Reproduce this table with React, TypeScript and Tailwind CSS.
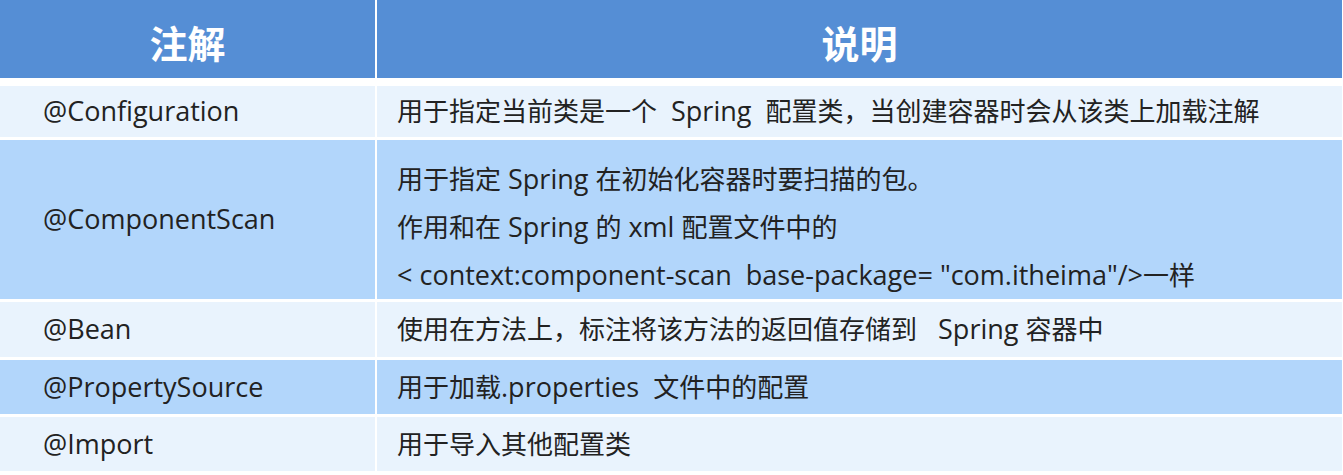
import React from "react";

const font = { fontFamily: '"Open Sans", "Noto Sans CJK SC", sans-serif' };

function Mixed({ text }: { text: string }) {
  const parts = text.split(/([\u3000-\u9fff\uff00-\uffef]+)/).filter((p) => p.length > 0);
  return (
    <>
      {parts.map((p, i) =>
        /[\u3000-\u9fff\uff00-\uffef]/.test(p) ? (
          <span key={i}>{p}</span>
        ) : (
          <span key={i} className="text-[27px]">
            {p}
          </span>
        )
      )}
    </>
  );
}

const rows: { name: string; desc: string[]; dark: boolean; h: string }[] = [
  { name: "@Configuration", desc: ["用于指定当前类是一个  Spring  配置类，当创建容器时会从该类上加载注解"], dark: false, h: "h-[51px]" },
  {
    name: "@ComponentScan",
    desc: [
      "用于指定 Spring 在初始化容器时要扫描的包。",
      "作用和在 Spring 的 xml 配置文件中的",
      "< context:component-scan  base-package= \"com.itheima\"/>一样",
    ],
    dark: true,
    h: "h-[159px]",
  },
  { name: "@Bean", desc: ["使用在方法上，标注将该方法的返回值存储到   Spring 容器中"], dark: false, h: "h-[55px]" },
  { name: "@PropertySource", desc: ["用于加载.properties  文件中的配置"], dark: true, h: "h-[54px]" },
  { name: "@Import", desc: ["用于导入其他配置类"], dark: false, h: "h-[54px]" },
];

export default function App() {
  return (
    <div className="w-[1343px] h-[475px] bg-white overflow-hidden" style={font}>
      <div className="flex flex-col w-[1342px]">
        <div className="flex gap-[2px] h-[78px] mb-[8px]">
          <div className="w-[375px] bg-[#558ed5] flex items-center justify-center pt-[8px] text-white font-bold text-[38px]">
            注解
          </div>
          <div className="flex-1 bg-[#558ed5] flex items-center justify-center pt-[8px] text-white font-bold text-[38px]">
            说明
          </div>
        </div>
        <div className="flex flex-col gap-[3px]">
          {rows.map((r) => {
            const bg = r.dark ? "bg-[#b2d6fb]" : "bg-[#e9f3fd]";
            return (
              <div key={r.name} className={`flex gap-[2px] ${r.h}`}>
                <div className={`w-[375px] ${bg} flex items-center pl-[43px] text-[27px] text-[#222]`}>
                  {r.name}
                </div>
                <div
                  className={`flex-1 ${bg} flex flex-col justify-center pl-[20px] text-[26px] text-[#222] whitespace-pre ${
                    r.desc.length > 1 ? "pt-[14px] leading-[48px]" : ""
                  }`}
                >
                  {r.desc.map((d, i) => (
                    <div key={i}>
                      <Mixed text={d} />
                    </div>
                  ))}
                </div>
              </div>
            );
          })}
        </div>
      </div>
    </div>
  );
}
